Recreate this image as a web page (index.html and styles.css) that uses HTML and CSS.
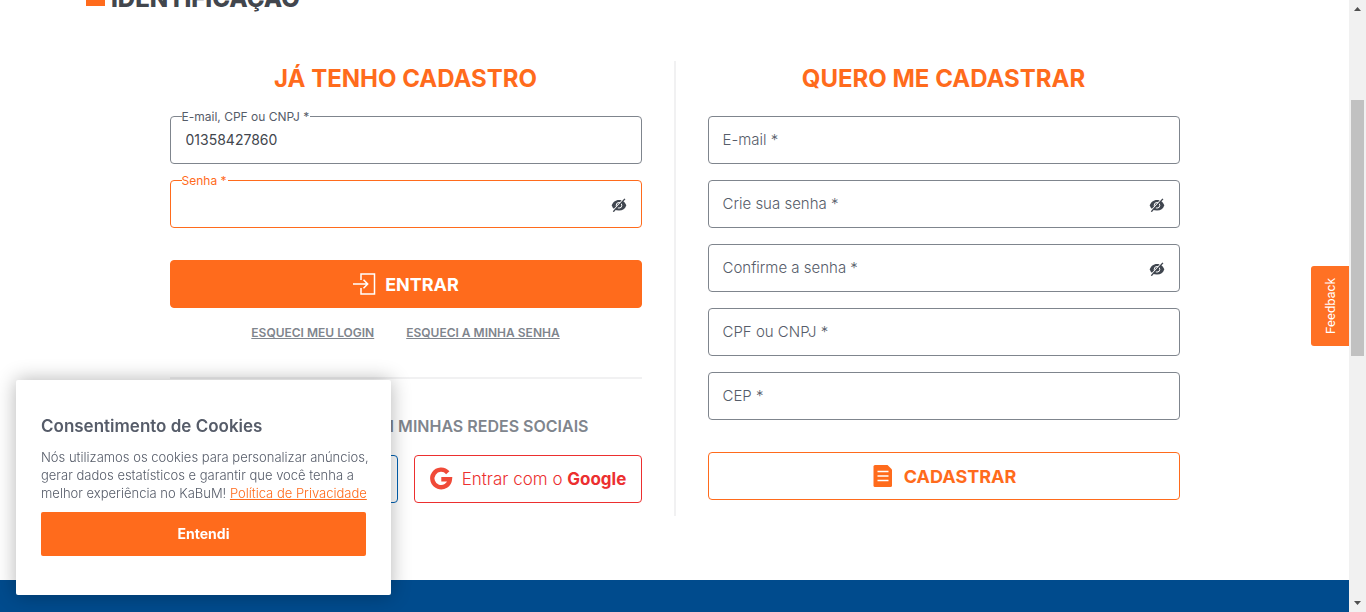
FILE: index.html
```html
<!DOCTYPE html>
<html lang="pt-BR">
<head>
<meta charset="utf-8">
<meta name="viewport" content="width=device-width, initial-scale=1">
<title>Identificação</title>
<link rel="stylesheet" href="styles.css">
</head>
<body>
<svg class="sprite" aria-hidden="true">
  <symbol id="eye-off" viewBox="0 0 16 14">
    <path d="M8 2C4.200 2 1.800 4.300.8 7.500c1 3.200 3.400 5 7.200 5s6.200-1.800 7.200-5C14.200 4.300 11.800 2 8 2z" fill="#40464f"/>
    <circle cx="8" cy="7.300" r="2.800" fill="none" stroke="#fff" stroke-width="1"/>
    <path d="M1.500 13.200 13 .6" stroke="#fff" stroke-width="1.200"/>
    <path d="M2.300 13.700 13.900.9" stroke="#40464f" stroke-width="1.400"/>
  </symbol>
</svg>
<div class="page">
  <header class="title">
    <span class="title-mark"></span>
    <h1>IDENTIFICAÇÃO</h1>
  </header>

  <main class="columns">
    <section class="column">
      <h2>JÁ TENHO CADASTRO</h2>
      <form class="form">
        <div class="field floated">
          <label for="login">E-mail, CPF ou CNPJ *</label>
          <input id="login" type="text" value="01358427860">
        </div>
        <div class="field floated active">
          <label for="senha">Senha *</label>
          <input id="senha" type="password">
          <button class="eye" type="button" aria-label="Mostrar senha"><svg><use href="#eye-off"/></svg></button>
        </div>
        <button class="btn btn-primary" type="submit">
          <svg class="btn-icon" viewBox="0 0 24 24" fill="none" stroke="#fff" stroke-width="1.500"><path d="M9 8V2h13.500v20H9v-6M1 12h14.500M11.500 7.800l4.200 4.200-4.200 4.200"/></svg>
          ENTRAR
        </button>
      </form>
      <nav class="links">
        <a href="#login">ESQUECI MEU LOGIN</a>
        <a href="#senha">ESQUECI A MINHA SENHA</a>
      </nav>
      <div class="social">
        <h3>ACESSAR COM MINHAS REDES SOCIAIS</h3>
        <div class="social-buttons">
          <button class="social-btn facebook" type="button" aria-label="Entrar com Facebook"></button>
          <button class="social-btn google" type="button">
            <svg viewBox="0 0 24 24" fill="none" stroke="#f04a38" stroke-width="4.400"><path d="M18.800 5.700A8.800 8.800 0 1 0 20.900 12.200H12.300"/></svg>
            <span>Entrar com o <b>Google</b></span>
          </button>
        </div>
      </div>
    </section>

    <section class="column register">
      <h2>QUERO ME CADASTRAR</h2>
      <form class="form">
        <div class="field"><label for="email">E-mail *</label><input id="email" type="email"></div>
        <div class="field">
          <label for="nova">Crie sua senha *</label><input id="nova" type="password">
          <button class="eye" type="button" aria-label="Mostrar senha"><svg><use href="#eye-off"/></svg></button>
        </div>
        <div class="field">
          <label for="confirma">Confirme a senha *</label><input id="confirma" type="password">
          <button class="eye" type="button" aria-label="Mostrar senha"><svg><use href="#eye-off"/></svg></button>
        </div>
        <div class="field"><label for="cpf">CPF ou CNPJ *</label><input id="cpf" type="text"></div>
        <div class="field"><label for="cep">CEP *</label><input id="cep" type="text"></div>
        <button class="btn btn-outline" type="submit">
          <svg class="btn-icon" viewBox="0 0 24 24"><path d="M4 1h12.500L21 5.500v16a1.500 1.500 0 0 1-1.500 1.500H4a1.500 1.500 0 0 1-1.500-1.500v-19A1.500 1.500 0 0 1 4 1z" fill="#ff6b1c"/><path d="M6.500 7.500h11M6.500 12h11M6.500 16.500h11" stroke="#fff" stroke-width="1.400"/></svg>
          CADASTRAR
        </button>
      </form>
    </section>
  </main>

  <footer class="footer"></footer>
</div>

<div class="scrollbar" aria-hidden="true">
  <svg viewBox="0 0 17 17"><path d="M5 11h7L8.500 7z" fill="#505050"/></svg>
  <span class="track-before"></span>
  <span class="thumb"></span>
  <span class="track-after"></span>
  <svg viewBox="0 0 17 17"><path d="M5 6h7L8.500 10z" fill="#505050"/></svg>
</div>

<button class="feedback" type="button">Feedback</button>

<aside class="cookies">
  <h4>Consentimento de Cookies</h4>
  <p>Nós utilizamos os cookies para personalizar anúncios, gerar dados estatísticos e garantir que você tenha a melhor experiência no KaBuM! <a href="#privacidade">Política de Privacidade</a></p>
  <button type="button">Entendi</button>
</aside>
</body>
</html>
```
FILE: styles.css
```css
* { box-sizing: border-box; }

body {
  margin: 0;
  display: flex;
  height: 100vh;
  overflow: hidden;
  background: #fff;
  color: #42464d;
  font-family: Inter, "Open Sans", sans-serif;
}

h1, h2, h3, h4, p { margin: 0; }
button, input { font-family: inherit; }
button { cursor: pointer; }
.sprite { display: none; }

.page {
  flex: 1;
  min-width: 0;
  display: flex;
  flex-direction: column;
}

/* Page title, scrolled partly above the viewport */
.title {
  display: flex;
  align-items: center;
  gap: 6px;
  padding-left: 86px;
  margin-top: -20px;
  height: 32px;
}
.title-mark { width: 19px; height: 19px; background: #ff6b1c; }
.title h1 { padding-top: 6px; font-size: 24px; line-height: 32px; font-weight: 800; }

.columns {
  width: 100%;
  max-width: 1010px;
  margin: 49px auto 64px;
  display: grid;
  grid-template-columns: 1fr 1fr;
  gap: 66px;
  min-height: 455px;
  background: linear-gradient(#f1f1f2, #f1f1f2) center / 2px 100% no-repeat;
}
.column { min-width: 0; }
.column h2 {
  padding-bottom: 19px;
  color: #ff6b1c;
  font-size: 24px;
  line-height: 36px;
  font-weight: 700;
  text-align: center;
}

.form { display: flex; flex-direction: column; gap: 16px; }

.field {
  position: relative;
  display: flex;
  height: 48px;
  border: 1px solid #7f858d;
  border-radius: 4px;
}
.field input {
  flex: 1;
  min-width: 0;
  padding: 0 15px 2px;
  border: 0;
  outline: 0;
  background: none;
  color: #42464d;
  font-size: 14px;
}
.field label {
  position: absolute;
  top: 13px;
  left: 14px;
  color: #565c69;
  font-size: 15px;
  line-height: 20px;
  font-weight: 300;
}
.field.floated label {
  top: -8px;
  left: 11px;
  padding-right: 1px;
  background: #fff;
  font-size: 12px;
  line-height: 16px;
  font-weight: 400;
}
.field.active { border-color: #ff6b1c; }
.field.active label { color: #ff6b1c; }

.eye {
  display: flex;
  align-items: center;
  margin-right: 14px;
  padding: 1px 0 0;
  border: 0;
  background: none;
}
.eye svg { width: 16px; height: 14px; }

.btn {
  display: flex;
  align-items: center;
  justify-content: center;
  gap: 9px;
  height: 48px;
  margin-top: 16px;
  border: 1px solid #ff6b1c;
  border-radius: 4px;
  font-size: 18px;
  font-weight: 700;
}
.btn-icon { width: 24px; height: 24px; }
.btn-primary { background: #ff6b1c; color: #fff; }
.btn-outline { background: #fff; color: #ff6b1c; }

.links {
  display: flex;
  justify-content: center;
  gap: 32px;
  padding: 16px 0 35px;
  font-size: 12px;
  line-height: 18px;
  font-weight: 600;
}
.links a { color: #7f858d; }

.social { border-top: 2px solid #f1f1f2; padding-top: 35px; }
.social h3 {
  padding: 0 53px 17px 0;
  color: #7f858d;
  font-size: 16px;
  line-height: 24px;
  font-weight: 600;
  text-align: right;
  white-space: nowrap;
}
.social-buttons { display: grid; grid-template-columns: 1fr 1fr; gap: 16px; }
.social-btn {
  display: flex;
  align-items: center;
  justify-content: center;
  gap: 9px;
  height: 48px;
  padding: 0;
  border: 1px solid;
  border-radius: 4px;
  background: #fff;
  font-size: 16px;
  font-weight: 300;
  white-space: nowrap;
}
.social-btn b { font-weight: 700; }
.social-btn svg { width: 24px; height: 24px; }
.facebook { color: #0060b1; }
.google { color: #ec2f2f; font-size: 17px; }

.footer { flex: 1; background: #004b8d; }

.scrollbar {
  display: flex;
  flex-direction: column;
  align-items: center;
  width: 17px;
  background: #f1f1f1;
}
.scrollbar svg { width: 17px; height: 17px; }
.track-before { flex: 83; }
.thumb { flex: 256; width: 13px; background: #c1c1c1; }
.track-after { flex: 239; }

.feedback {
  position: fixed;
  top: 266px;
  right: 17px;
  width: 38px;
  height: 80px;
  padding: 0;
  border: 0;
  border-radius: 3px 0 0 3px;
  background: #ff7124;
  color: #fff;
  font-family: Roboto, sans-serif;
  font-size: 13px;
  writing-mode: sideways-lr;
}

.cookies {
  position: fixed;
  left: 16px;
  bottom: 17px;
  width: 375px;
  padding: 34px 25px 39px;
  border-radius: 2px;
  background: #fff;
  box-shadow: 0 0 20px rgba(0, 0, 0, .3);
  color: #565c69;
}
.cookies h4 { font-size: 17px; line-height: 24px; font-weight: 600; }
.cookies p {
  padding: 10px 0;
  margin-right: -5px;
  font-size: 13px;
  line-height: 18px;
  font-weight: 300;
}
.cookies a { color: #ff6b1c; }
.cookies button {
  width: 100%;
  height: 44px;
  padding-bottom: 3px;
  border: 0;
  border-radius: 2px;
  background: #ff6b1c;
  color: #fff;
  font-size: 14px;
  font-weight: 700;
}
```
